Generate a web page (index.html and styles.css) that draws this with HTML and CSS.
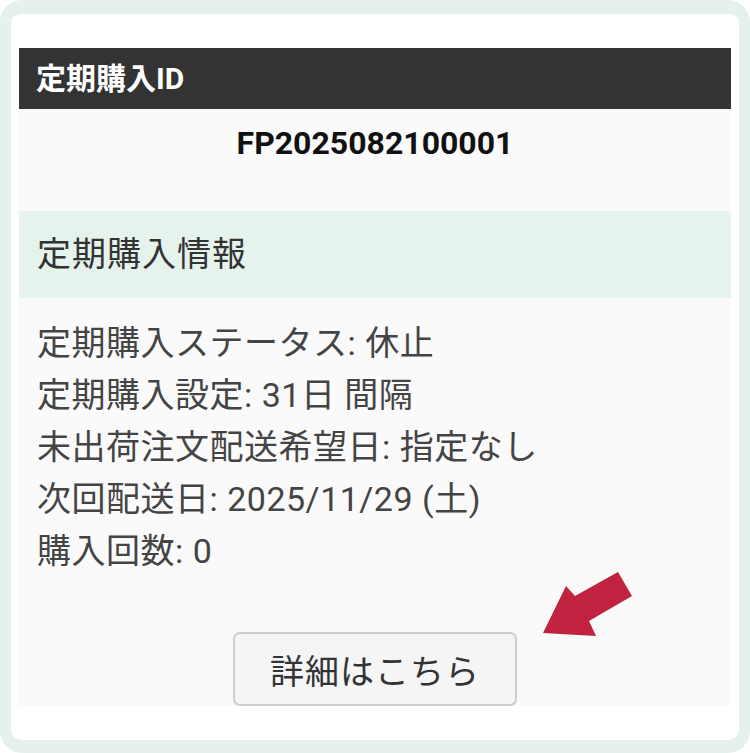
FILE: index.html
```html
<!DOCTYPE html>
<html lang="ja">
<head>
  <meta charset="UTF-8">
  <meta name="viewport" content="width=device-width, initial-scale=1.0">
  <title>定期購入</title>
  <link rel="stylesheet" href="styles.css">
</head>
<body>
  <div class="frame">
    <div class="card">
      <div class="card-head">定期購入ID</div>
      <div class="card-id">FP2025082100001</div>
      <div class="section-title">定期購入情報</div>
      <div class="details">
        <p>定期購入ステータス: 休止</p>
        <p>定期購入設定: 31日 間隔</p>
        <p>未出荷注文配送希望日: 指定なし</p>
        <p>次回配送日: 2025/11/29 (土)</p>
        <p>購入回数: 0</p>
        <div class="actions">
          <button class="detail-btn">詳細はこちら</button>
          <!-- 注目矢印 -->
          <svg class="pointer" width="100" height="70" viewBox="535 570 100 70">
            <polygon points="620,573 634,597 591,622 598,637 545,634 568,587 577,597" fill="#c0223f"/>
          </svg>
        </div>
      </div>
    </div>
  </div>
</body>
</html>
```

FILE: styles.css
```css
* {
  box-sizing: border-box;
}
body {
  margin: 0;
  padding: 0;
  background: #fff;
  font-family: Roboto, "Noto Sans CJK JP", sans-serif;
  color: #444;
}
.frame {
  width: 750px;
  height: 753px;
  border-style: solid;
  border-color: #e6f1eb;
  border-width: 14px 11px 13px 11px;
  border-radius: 22px;
  background: #fff;
  padding: 34px 8px 0 8px;
}
.card {
  background: #fafafa;
}
.card-head {
  background: #333;
  color: #fff;
  font-weight: bold;
  font-size: 30px;
  height: 61px;
  line-height: 61px;
  padding-left: 17px;
}
.card-id {
  text-align: center;
  font-weight: bold;
  font-size: 32px;
  color: #111;
  padding: 17px 0 51px;
  line-height: 34px;
}
.section-title {
  background: #e6f2ec;
  font-size: 34px;
  letter-spacing: 1px;
  color: #333;
  height: 87px;
  line-height: 87px;
  padding-left: 18px;
}
.details {
  padding: 19px 18px 0;
}
.details p {
  margin: 0;
  font-size: 34px;
  letter-spacing: 0.5px;
  line-height: 52px;
}
.actions {
  position: relative;
  display: flex;
  justify-content: center;
  padding-top: 55px;
  margin-bottom: -2px;
}
.detail-btn {
  width: 284px;
  height: 74px;
  background: #f5f5f5;
  border: 2px solid #ccc;
  border-radius: 7px;
  font-family: Roboto, "Noto Sans CJK JP", sans-serif;
  font-size: 34px;
  letter-spacing: 1px;
  color: #333;
}
.pointer {
  position: absolute;
  left: 496px;
  top: -8px;
}
```
